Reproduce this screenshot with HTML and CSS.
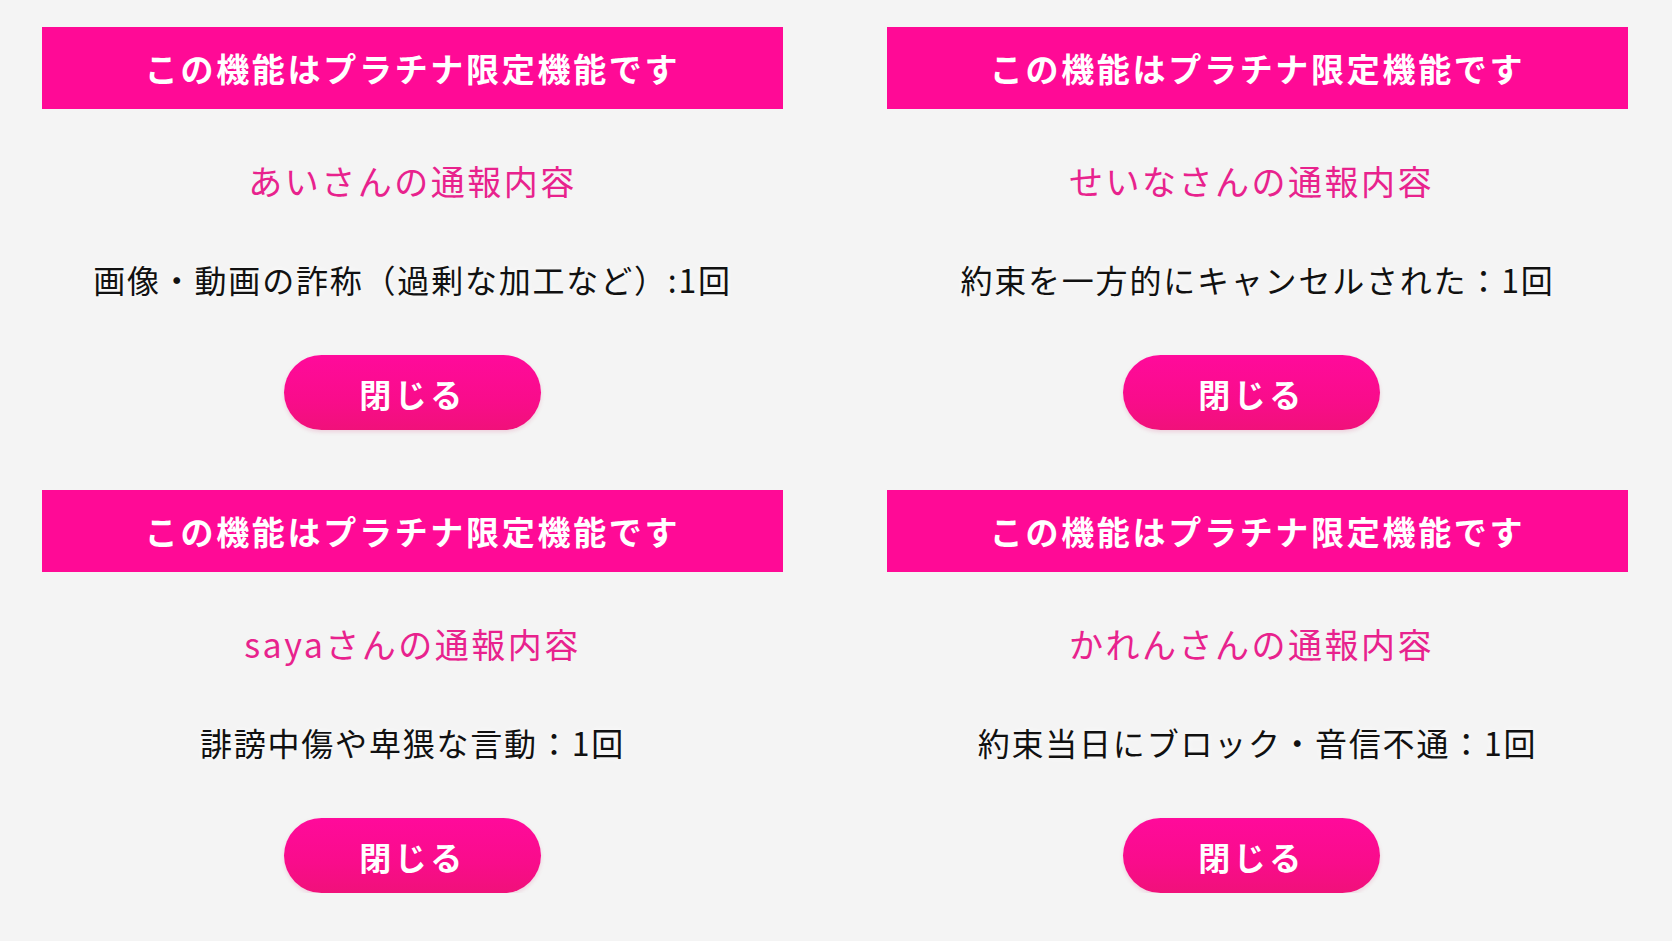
FILE: index.html
```html
<!DOCTYPE html>
<html lang="ja">
<head>
<meta charset="utf-8">
<title>通報内容</title>
<link rel="stylesheet" href="styles.css">
</head>
<body>
<main class="grid">
  <section class="card">
    <div class="banner">この機能はプラチナ限定機能です</div>
    <h2 class="name">あいさんの通報内容</h2>
    <p class="desc">画像・動画の詐称（過剰な加工など）:1回</p>
    <button class="close">閉じる</button>
  </section>
  <section class="card card-right">
    <div class="banner">この機能はプラチナ限定機能です</div>
    <h2 class="name">せいなさんの通報内容</h2>
    <p class="desc">約束を一方的にキャンセルされた：1回</p>
    <button class="close">閉じる</button>
  </section>
  <section class="card">
    <div class="banner">この機能はプラチナ限定機能です</div>
    <h2 class="name">sayaさんの通報内容</h2>
    <p class="desc">誹謗中傷や卑猥な言動：1回</p>
    <button class="close">閉じる</button>
  </section>
  <section class="card card-right">
    <div class="banner">この機能はプラチナ限定機能です</div>
    <h2 class="name">かれんさんの通報内容</h2>
    <p class="desc">約束当日にブロック・音信不通：1回</p>
    <button class="close">閉じる</button>
  </section>
</main>
</body>
</html>
```

FILE: styles.css
```css
* { box-sizing: border-box; }
html, body {
  margin: 0;
  padding: 0;
  background: #f4f4f4;
  font-family: "Noto Sans CJK JP", "Noto Sans", sans-serif;
}
.grid {
  display: grid;
  grid-template-columns: 741px 741px;
  column-gap: 104px;
  row-gap: 60px;
  padding: 27px 44px 0 42px;
}
.card {
  display: flex;
  flex-direction: column;
  align-items: center;
}
.banner {
  width: 100%;
  height: 82px;
  background: #ff0a96;
  color: #fff;
  font-weight: 700;
  font-size: 33px;
  letter-spacing: 2.7px;
  display: flex;
  align-items: center;
  justify-content: center;
}
.name {
  margin: 52px 0 0;
  height: 40px;
  line-height: 40px;
  font-size: 34px;
  font-weight: 400;
  letter-spacing: 2.5px;
  color: #e8228d;
}
.desc {
  margin: 58px 0 0;
  height: 40px;
  line-height: 40px;
  font-size: 32px;
  font-weight: 400;
  letter-spacing: 1.8px;
  color: #111;
  text-shadow: 0 0 6px rgba(255,255,255,0.9);
}
.close {
  margin-top: 56px;
  width: 257px;
  height: 75px;
  border: none;
  border-radius: 38px;
  background: linear-gradient(180deg, #ff0a9b 0%, #f90c8b 60%, #f0117a 100%);
  color: #fff;
  font-family: "Noto Sans CJK JP", "Noto Sans", sans-serif;
  font-weight: 700;
  font-size: 32px;
  letter-spacing: 3.5px;
  box-shadow: 0 2px 4px rgba(200, 0, 90, 0.15);
  padding: 0;
}
.card-right .name,
.card-right .close {
  margin-right: 12px;
}
```
